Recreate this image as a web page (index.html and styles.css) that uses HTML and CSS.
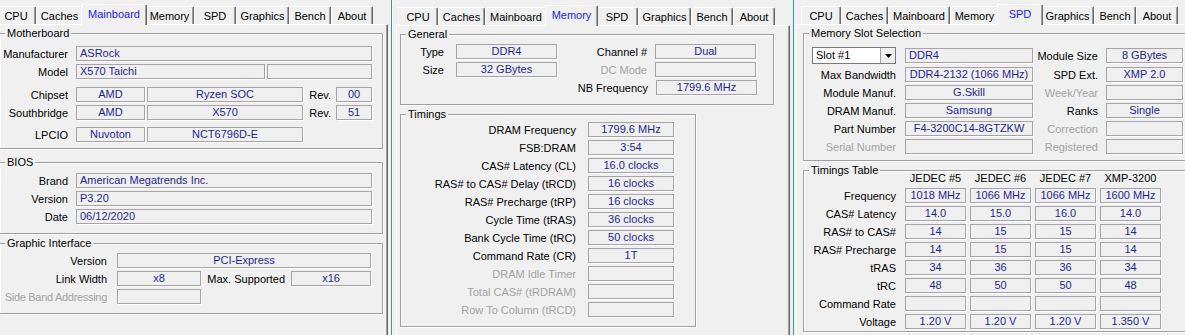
FILE: index.html
```html
<!DOCTYPE html>
<html lang="en">
<head>
    <meta charset="UTF-8">
    <meta name="viewport" content="width=device-width, initial-scale=1.0">
    <title>CPU-Z</title>

    <link rel="stylesheet" href="styles.css">
</head>
<body>
<div class="desk">

  <!-- mainboard window (cut off on the left) -->
  <div class="win win-left">
    <div class="tabs">
      <span class="tab t-cpu">CPU</span>
      <span class="tab t-caches">Caches</span>
      <span class="tab t-mainboard sel">Mainboard</span>
      <span class="tab t-memory">Memory</span>
      <span class="tab t-spd">SPD</span>
      <span class="tab t-graphics">Graphics</span>
      <span class="tab t-bench">Bench</span>
      <span class="tab t-about">About</span>
    </div>
    <div class="page">
      <fieldset class="grp mb">
        <legend>Motherboard</legend>
        <div class="row"><span class="lbl">Manufacturer</span><span class="fld fl w296">ASRock</span></div>
        <div class="row"><span class="lbl">Model</span><span class="fld fl w189">X570 Taichi</span><span class="fld w105"></span></div>
        <div class="row gap8"><span class="lbl">Chipset</span><span class="fld w69">AMD</span><span class="fld w156">Ryzen SOC</span><span class="rev">Rev.</span><span class="fld w36">00</span></div>
        <div class="row"><span class="lbl">Southbridge</span><span class="fld w69">AMD</span><span class="fld w156">X570</span><span class="rev">Rev.</span><span class="fld w36">51</span></div>
        <div class="row gap7"><span class="lbl">LPCIO</span><span class="fld w69">Nuvoton</span><span class="fld w156">NCT6796D-E</span></div>
      </fieldset>

      <fieldset class="grp bios">
        <legend>BIOS</legend>
        <div class="row"><span class="lbl">Brand</span><span class="fld fl w296">American Megatrends Inc.</span></div>
        <div class="row"><span class="lbl">Version</span><span class="fld fl w296">P3.20</span></div>
        <div class="row"><span class="lbl">Date</span><span class="fld fl w296">06/12/2020</span></div>
      </fieldset>

      <fieldset class="grp gi">
        <legend>Graphic Interface</legend>
        <div class="row"><span class="lbl">Version</span><span class="fld w254">PCI-Express</span></div>
        <div class="row"><span class="lbl">Link Width</span><span class="fld w84">x8</span><span class="lbl2">Max. Supported</span><span class="fld w80">x16</span></div>
        <div class="row"><span class="lbl off tight">Side Band Addressing</span><span class="fld w84"></span></div>
      </fieldset>
    </div>
  </div>

  <!-- memory window (active) -->
  <div class="win win-mid">
    <div class="tabs">
      <span class="tab t-cpu">CPU</span>
      <span class="tab t-caches">Caches</span>
      <span class="tab t-mainboard">Mainboard</span>
      <span class="tab t-memory sel">Memory</span>
      <span class="tab t-spd">SPD</span>
      <span class="tab t-graphics">Graphics</span>
      <span class="tab t-bench">Bench</span>
      <span class="tab t-about">About</span>
    </div>
    <div class="page">
      <fieldset class="grp gen">
        <legend>General</legend>
        <div class="row"><span class="lbl">Type</span><span class="fld w101">DDR4</span><span class="lbl2">Channel #</span><span class="fld w101">Dual</span></div>
        <div class="row"><span class="lbl">Size</span><span class="fld w101">32 GBytes</span><span class="lbl2 off">DC Mode</span><span class="fld w101"></span></div>
        <div class="row"><span class="skip"></span><span class="lbl2">NB Frequency</span><span class="fld w101">1799.6 MHz</span></div>
      </fieldset>

      <fieldset class="grp tim">
        <legend>Timings</legend>
        <div class="row"><span class="lbl">DRAM Frequency</span><span class="fld w86">1799.6 MHz</span></div>
        <div class="row"><span class="lbl">FSB:DRAM</span><span class="fld w86">3:54</span></div>
        <div class="row"><span class="lbl">CAS# Latency (CL)</span><span class="fld w86">16.0 clocks</span></div>
        <div class="row"><span class="lbl">RAS# to CAS# Delay (tRCD)</span><span class="fld w86">16 clocks</span></div>
        <div class="row"><span class="lbl">RAS# Precharge (tRP)</span><span class="fld w86">16 clocks</span></div>
        <div class="row"><span class="lbl">Cycle Time (tRAS)</span><span class="fld w86">36 clocks</span></div>
        <div class="row"><span class="lbl">Bank Cycle Time (tRC)</span><span class="fld w86">50 clocks</span></div>
        <div class="row"><span class="lbl">Command Rate (CR)</span><span class="fld w86">1T</span></div>
        <div class="row"><span class="lbl off">DRAM Idle Timer</span><span class="fld w86"></span></div>
        <div class="row"><span class="lbl off">Total CAS# (tRDRAM)</span><span class="fld w86"></span></div>
        <div class="row"><span class="lbl off">Row To Column (tRCD)</span><span class="fld w86"></span></div>
      </fieldset>
    </div>
  </div>

  <!-- spd window (cut off on the right) -->
  <div class="win win-right">
    <div class="tabs">
      <span class="tab t-cpu">CPU</span>
      <span class="tab t-caches">Caches</span>
      <span class="tab t-mainboard">Mainboard</span>
      <span class="tab t-memory">Memory</span>
      <span class="tab t-spd sel">SPD</span>
      <span class="tab t-graphics">Graphics</span>
      <span class="tab t-bench">Bench</span>
      <span class="tab t-about">About</span>
    </div>
    <div class="page">
      <fieldset class="grp slot">
        <legend>Memory Slot Selection</legend>
        <div class="row tall">
          <span class="combo"><span class="combo-text">Slot #1</span><span class="combo-btn"><svg width="7" height="4" viewBox="0 0 7 4"><polygon points="0,0 7,0 3.5,4" fill="#000"/></svg></span></span>
          <span class="fld fl w128">DDR4</span><span class="lbl2">Module Size</span><span class="fld w77">8 GBytes</span>
        </div>
        <div class="row"><span class="lbl">Max Bandwidth</span><span class="fld w128">DDR4-2132 (1066 MHz)</span><span class="lbl2">SPD Ext.</span><span class="fld w77">XMP 2.0</span></div>
        <div class="row"><span class="lbl">Module Manuf.</span><span class="fld w128">G.Skill</span><span class="lbl2 off">Week/Year</span><span class="fld w77"></span></div>
        <div class="row"><span class="lbl">DRAM Manuf.</span><span class="fld w128">Samsung</span><span class="lbl2">Ranks</span><span class="fld w77">Single</span></div>
        <div class="row"><span class="lbl">Part Number</span><span class="fld w128">F4-3200C14-8GTZKW</span><span class="lbl2 off">Correction</span><span class="fld w77"></span></div>
        <div class="row"><span class="lbl off">Serial Number</span><span class="fld w128"></span><span class="lbl2 off">Registered</span><span class="fld w77"></span></div>
      </fieldset>

      <fieldset class="grp tt">
        <legend>Timings Table</legend>
        <div class="hdr"><span class="skip"></span><span class="hc">JEDEC #5</span><span class="hc">JEDEC #6</span><span class="hc">JEDEC #7</span><span class="hc">XMP-3200</span></div>
        <div class="row"><span class="lbl">Frequency</span><span class="fld">1018 MHz</span><span class="fld">1066 MHz</span><span class="fld">1066 MHz</span><span class="fld">1600 MHz</span></div>
        <div class="row"><span class="lbl">CAS# Latency</span><span class="fld">14.0</span><span class="fld">15.0</span><span class="fld">16.0</span><span class="fld">14.0</span></div>
        <div class="row"><span class="lbl">RAS# to CAS#</span><span class="fld">14</span><span class="fld">15</span><span class="fld">15</span><span class="fld">14</span></div>
        <div class="row"><span class="lbl">RAS# Precharge</span><span class="fld">14</span><span class="fld">15</span><span class="fld">15</span><span class="fld">14</span></div>
        <div class="row"><span class="lbl">tRAS</span><span class="fld">34</span><span class="fld">36</span><span class="fld">36</span><span class="fld">34</span></div>
        <div class="row"><span class="lbl">tRC</span><span class="fld">48</span><span class="fld">50</span><span class="fld">50</span><span class="fld">48</span></div>
        <div class="row"><span class="lbl">Command Rate</span><span class="fld"></span><span class="fld"></span><span class="fld"></span><span class="fld"></span></div>
        <div class="row"><span class="lbl">Voltage</span><span class="fld">1.20 V</span><span class="fld">1.20 V</span><span class="fld">1.20 V</span><span class="fld">1.350 V</span></div>
      </fieldset>
    </div>
  </div>

</div>
</body>
</html>
```

FILE: styles.css
```css
*{
  box-sizing: border-box;
}

body{
  margin: 0;
  background-color: #f0f0f0;
  font-family: "Liberation Sans", Arial, sans-serif;
  font-size: 11px;
  color: #000;
}

.desk{
  display: flex;
  height: 335px;
  overflow: hidden;
}

.win{
  height: 335px;
  overflow: hidden;
  flex-shrink: 0;
}

.win-left{
  width: 391px;
}

.win-mid{
  width: 403px;
  border-left: 1px solid #3590d8;
  border-right: 1px solid #3590d8;
  box-shadow: inset 1px 0 #fff;
}

.win-right{
  flex: 1;
}

/* tab strip */
.tabs{
  display: flex;
  align-items: flex-end;
  height: 24px;
}

.win-left .tabs{
  margin-left: -4px;
}

.win-mid .tabs{
  height: 25px;
  padding-left: 6px;
}

.win-right .tabs{
  padding-left: 7px;
}

.tab{
  box-sizing: content-box;
  height: 17px;
  border: 1px solid #fff;
  border-bottom: none;
  border-right-color: #696969;
  border-radius: 2px 2px 0 0;
  box-shadow: inset -1px 0 #a0a0a0;
  background-color: #f0f0f0;
  text-align: center;
  line-height: 18px;
  white-space: nowrap;
}

.tab.sel{
  height: 20px;
  margin: 0 -2px -1px;
  padding: 0 2px;
  line-height: 19px;
  color: #1a1aff;
  position: relative;
  z-index: 1;
}

.t-cpu{ width: 38px; }
.t-caches{ width: 45px; }
.t-mainboard{ width: 60px; }
.t-memory{ width: 47px; }
.t-spd{ width: 40px; }
.t-graphics{ width: 51px; }
.t-bench{ width: 40px; }
.t-about{ width: 40px; }

/* tab page */
.page{
  height: 320px;
  padding-top: 2px;
  border-top: 1px solid #fff;
  border-left: 1px solid #fff;
  border-right: 1px solid #696969;
  box-shadow: inset -1px 0 #a0a0a0;
}

.win-left .page{
  margin-left: -7px;
  margin-right: 3px;
  padding-left: 5px;
  padding-right: 4px;
}

.win-mid .page{
  margin-left: 4px;
  margin-right: 3px;
  padding-left: 3px;
}

.win-right .page{
  margin-left: 2px;
  padding-left: 6px;
  border-right: none;
  box-shadow: none;
}

/* group boxes */
.grp{
  margin: 0;
  padding: 0;
  min-width: 0;
  border: 1px solid #a0a0a0;
  box-shadow: inset 1px 1px #fff, 1px 1px #fff;
}

.grp legend{
  margin-left: 5px;
  padding: 0 2px;
  line-height: 12px;
  background-color: #f0f0f0;
}

.row{
  display: flex;
  align-items: center;
  height: 15px;
}

.row + .row{
  margin-top: 3px;
}

.row.gap8{
  margin-top: 8px;
}

.row.gap7{
  margin-top: 7px;
}

.row.tall{
  height: 17px;
}

.lbl, .lbl2, .rev{
  flex-shrink: 0;
  text-align: right;
  white-space: nowrap;
}

.off{
  color: #a3a3a3;
}

.tight{
  letter-spacing: -0.3px;
}

.fld{
  flex-shrink: 0;
  height: 15px;
  border: 1px solid #a5a5a5;
  box-shadow: 1px 1px 0 #fff;
  line-height: 13px;
  text-align: center;
  color: #1f1f99;
  white-space: nowrap;
  overflow: hidden;
}

.fld.fl{
  text-align: left;
  padding-left: 3px;
}

.skip{
  flex-shrink: 0;
}

.w36{ width: 36px; }
.w69{ width: 69px; }
.w77{ width: 77px; }
.w80{ width: 80px; }
.w84{ width: 84px; }
.w86{ width: 86px; }
.w101{ width: 101px; }
.w105{ width: 105px; }
.w128{ width: 128px; }
.w156{ width: 156px; }
.w189{ width: 189px; }
.w254{ width: 254px; }
.w296{ width: 296px; }

/* mainboard */
.mb{
  padding-top: 7px;
  padding-bottom: 6px;
}

.mb .lbl, .bios .lbl{
  width: 68px;
  margin-right: 8px;
}

.mb .fld + .fld{
  margin-left: 2px;
}

.rev{
  width: 28px;
  margin-right: 5px;
}

.bios{
  margin-top: 7px;
  padding-top: 5px;
  padding-bottom: 9px;
}

.gi{
  margin-top: 3px;
  padding-top: 4px;
  padding-bottom: 9px;
}

.gi .lbl{
  width: 107px;
  margin-right: 10px;
}

.gi .lbl2{
  width: 84px;
  margin-right: 6px;
}

/* memory */
.gen{
  width: 374px;
  padding-top: 4px;
  padding-bottom: 9px;
}

.gen .lbl{
  width: 43px;
  margin-right: 12px;
}

.gen .skip{
  width: 157px;
}

.gen .lbl2{
  width: 90px;
  margin-right: 8px;
}

.tim{
  width: 296px;
  margin-top: 3px;
  padding-top: 2px;
  padding-bottom: 9px;
}

.tim .lbl{
  width: 175px;
  margin-right: 12px;
}

/* spd */
.slot{
  width: 392px;
  padding-top: 8px;
  padding-bottom: 6px;
}

.slot .lbl, .tt .lbl{
  width: 92px;
  margin-right: 9px;
}

.slot .lbl2{
  width: 65px;
  margin-right: 8px;
}

.combo{
  display: flex;
  flex-shrink: 0;
  width: 84px;
  height: 17px;
  margin-left: 8px;
  margin-right: 9px;
  border: 1px solid #7a7a7a;
  background-color: #fff;
}

.combo-text{
  flex: 1;
  padding-left: 3px;
  line-height: 15px;
}

.combo-btn{
  display: flex;
  align-items: center;
  justify-content: center;
  width: 15px;
  border-left: 1px solid #a0a0a0;
  background-color: #f0f0f0;
}

.tt{
  width: 392px;
  margin-top: 3px;
  padding-bottom: 2px;
}

.hdr{
  display: flex;
  height: 12px;
  margin-top: -4px;
  line-height: 12px;
}

.hdr + .row{
  margin-top: 4px;
}

.tt .skip{
  width: 101px;
}

.hc{
  width: 61px;
  text-align: center;
  white-space: nowrap;
}

.hc + .hc{
  margin-left: 4px;
}

.tt .fld{
  width: 61px;
}

.tt .fld + .fld{
  margin-left: 4px;
}
```
